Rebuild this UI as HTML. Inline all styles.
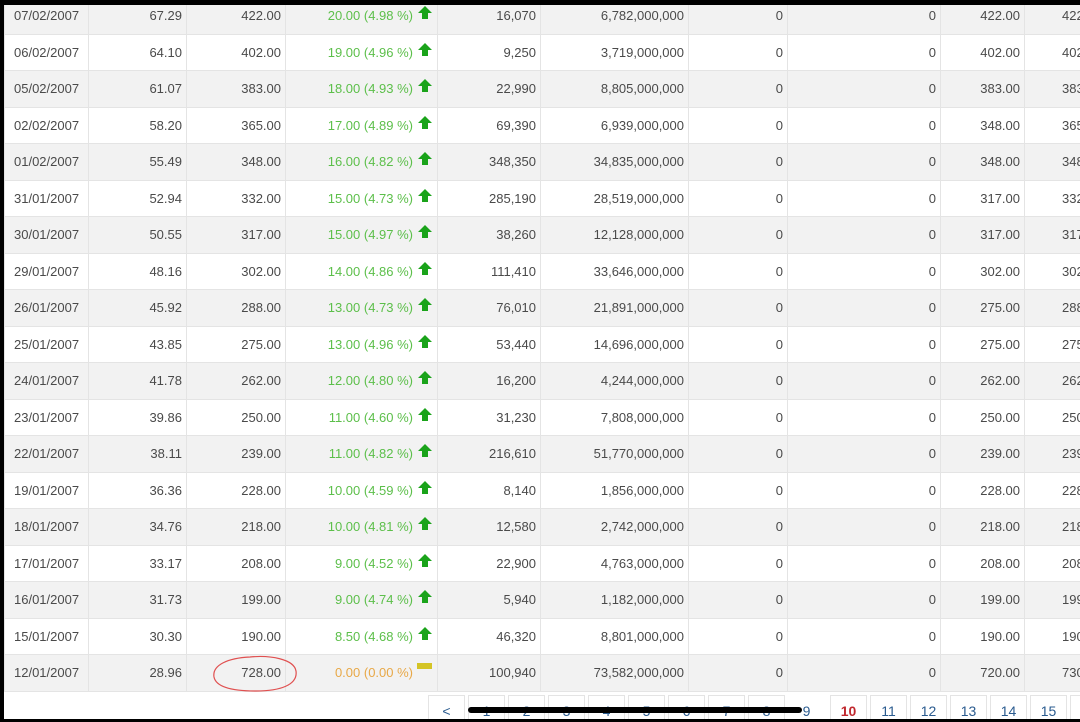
<!DOCTYPE html>
<html><head><meta charset="utf-8"><style>
html,body{margin:0;padding:0;width:1080px;height:722px;overflow:hidden;background:#fff;position:relative}
table{position:absolute;left:4px;top:-3px;border-collapse:collapse;table-layout:fixed;width:1100px;font:13px "Liberation Sans",sans-serif;color:#4a4a4a}
td{height:35.5px;border:1px solid #e4e4e4;padding:0 4px 0 0;text-align:right;white-space:nowrap;overflow:hidden}
td:first-child{text-align:left;padding-left:9px}
tr:nth-child(odd) td{background:#f2f2f2}
td.c{position:relative;padding-right:24px;color:#5cbf4a}
td.c i{position:absolute;right:5px;top:8px;width:14px;height:13px}
td.y{color:#e8a847}
td.y b{position:absolute;right:5px;top:8px;width:15px;height:6px;background:#d4c425}
td.l{text-align:left;padding-left:37px}
.blk{position:absolute;background:#000}
.pg{position:absolute;top:695px;width:37px;height:30px;border:1px solid #e4e4e4;box-sizing:border-box;font:14px "Liberation Sans",sans-serif;color:#2a5b8f;text-align:center;line-height:30px;background:#fff}
</style></head><body>
<svg width="0" height="0" style="position:absolute"><defs><symbol id="a" viewBox="0 0 14 13"><path d="M7 0L14 7H10V13H4V7H0Z" fill="#1aa31a"/></symbol></defs></svg>
<table>
<colgroup><col style="width:84px"><col style="width:98px"><col style="width:99px"><col style="width:152px"><col style="width:103px"><col style="width:148px"><col style="width:99px"><col style="width:153px"><col style="width:84px"><col style="width:80px"></colgroup>
<tr><td>07/02/2007</td><td>67.29</td><td>422.00</td><td class="c">20.00 (4.98 %)<i><svg width="14" height="13"><use href="#a"/></svg></i></td><td>16,070</td><td>6,782,000,000</td><td>0</td><td>0</td><td>422.00</td><td class="l">422.00</td></tr>
<tr><td>06/02/2007</td><td>64.10</td><td>402.00</td><td class="c">19.00 (4.96 %)<i><svg width="14" height="13"><use href="#a"/></svg></i></td><td>9,250</td><td>3,719,000,000</td><td>0</td><td>0</td><td>402.00</td><td class="l">402.00</td></tr>
<tr><td>05/02/2007</td><td>61.07</td><td>383.00</td><td class="c">18.00 (4.93 %)<i><svg width="14" height="13"><use href="#a"/></svg></i></td><td>22,990</td><td>8,805,000,000</td><td>0</td><td>0</td><td>383.00</td><td class="l">383.00</td></tr>
<tr><td>02/02/2007</td><td>58.20</td><td>365.00</td><td class="c">17.00 (4.89 %)<i><svg width="14" height="13"><use href="#a"/></svg></i></td><td>69,390</td><td>6,939,000,000</td><td>0</td><td>0</td><td>348.00</td><td class="l">365.00</td></tr>
<tr><td>01/02/2007</td><td>55.49</td><td>348.00</td><td class="c">16.00 (4.82 %)<i><svg width="14" height="13"><use href="#a"/></svg></i></td><td>348,350</td><td>34,835,000,000</td><td>0</td><td>0</td><td>348.00</td><td class="l">348.00</td></tr>
<tr><td>31/01/2007</td><td>52.94</td><td>332.00</td><td class="c">15.00 (4.73 %)<i><svg width="14" height="13"><use href="#a"/></svg></i></td><td>285,190</td><td>28,519,000,000</td><td>0</td><td>0</td><td>317.00</td><td class="l">332.00</td></tr>
<tr><td>30/01/2007</td><td>50.55</td><td>317.00</td><td class="c">15.00 (4.97 %)<i><svg width="14" height="13"><use href="#a"/></svg></i></td><td>38,260</td><td>12,128,000,000</td><td>0</td><td>0</td><td>317.00</td><td class="l">317.00</td></tr>
<tr><td>29/01/2007</td><td>48.16</td><td>302.00</td><td class="c">14.00 (4.86 %)<i><svg width="14" height="13"><use href="#a"/></svg></i></td><td>111,410</td><td>33,646,000,000</td><td>0</td><td>0</td><td>302.00</td><td class="l">302.00</td></tr>
<tr><td>26/01/2007</td><td>45.92</td><td>288.00</td><td class="c">13.00 (4.73 %)<i><svg width="14" height="13"><use href="#a"/></svg></i></td><td>76,010</td><td>21,891,000,000</td><td>0</td><td>0</td><td>275.00</td><td class="l">288.00</td></tr>
<tr><td>25/01/2007</td><td>43.85</td><td>275.00</td><td class="c">13.00 (4.96 %)<i><svg width="14" height="13"><use href="#a"/></svg></i></td><td>53,440</td><td>14,696,000,000</td><td>0</td><td>0</td><td>275.00</td><td class="l">275.00</td></tr>
<tr><td>24/01/2007</td><td>41.78</td><td>262.00</td><td class="c">12.00 (4.80 %)<i><svg width="14" height="13"><use href="#a"/></svg></i></td><td>16,200</td><td>4,244,000,000</td><td>0</td><td>0</td><td>262.00</td><td class="l">262.00</td></tr>
<tr><td>23/01/2007</td><td>39.86</td><td>250.00</td><td class="c">11.00 (4.60 %)<i><svg width="14" height="13"><use href="#a"/></svg></i></td><td>31,230</td><td>7,808,000,000</td><td>0</td><td>0</td><td>250.00</td><td class="l">250.00</td></tr>
<tr><td>22/01/2007</td><td>38.11</td><td>239.00</td><td class="c">11.00 (4.82 %)<i><svg width="14" height="13"><use href="#a"/></svg></i></td><td>216,610</td><td>51,770,000,000</td><td>0</td><td>0</td><td>239.00</td><td class="l">239.00</td></tr>
<tr><td>19/01/2007</td><td>36.36</td><td>228.00</td><td class="c">10.00 (4.59 %)<i><svg width="14" height="13"><use href="#a"/></svg></i></td><td>8,140</td><td>1,856,000,000</td><td>0</td><td>0</td><td>228.00</td><td class="l">228.00</td></tr>
<tr><td>18/01/2007</td><td>34.76</td><td>218.00</td><td class="c">10.00 (4.81 %)<i><svg width="14" height="13"><use href="#a"/></svg></i></td><td>12,580</td><td>2,742,000,000</td><td>0</td><td>0</td><td>218.00</td><td class="l">218.00</td></tr>
<tr><td>17/01/2007</td><td>33.17</td><td>208.00</td><td class="c">9.00 (4.52 %)<i><svg width="14" height="13"><use href="#a"/></svg></i></td><td>22,900</td><td>4,763,000,000</td><td>0</td><td>0</td><td>208.00</td><td class="l">208.00</td></tr>
<tr><td>16/01/2007</td><td>31.73</td><td>199.00</td><td class="c">9.00 (4.74 %)<i><svg width="14" height="13"><use href="#a"/></svg></i></td><td>5,940</td><td>1,182,000,000</td><td>0</td><td>0</td><td>199.00</td><td class="l">199.00</td></tr>
<tr><td>15/01/2007</td><td>30.30</td><td>190.00</td><td class="c">8.50 (4.68 %)<i><svg width="14" height="13"><use href="#a"/></svg></i></td><td>46,320</td><td>8,801,000,000</td><td>0</td><td>0</td><td>190.00</td><td class="l">190.00</td></tr>
<tr><td>12/01/2007</td><td>28.96</td><td>728.00</td><td class="c y">0.00 (0.00 %)<b></b></td><td>100,940</td><td>73,582,000,000</td><td>0</td><td>0</td><td>720.00</td><td class="l">730.00</td></tr>
</table>
<svg style="position:absolute;left:210px;top:653px" width="92" height="42"><path d="M40 4C60 2 84 6 86 18C88 32 70 38 46 38C22 38 6 34 4 24C2 12 18 5 40 4Z" fill="none" stroke="#e05050" stroke-width="1.2"/></svg>
<div class="pg" style="left:428px">&lt;</div>
<div class="pg" style="left:468px">1</div>
<div class="pg" style="left:508px">2</div>
<div class="pg" style="left:548px">3</div>
<div class="pg" style="left:588px">4</div>
<div class="pg" style="left:628px">5</div>
<div class="pg" style="left:668px">6</div>
<div class="pg" style="left:708px">7</div>
<div class="pg" style="left:748px">8</div>
<div class="pg" style="left:788px;border-color:transparent">9</div>
<div class="pg" style="left:830px;color:#c0282e;font-weight:bold">10</div>
<div class="pg" style="left:870px">11</div>
<div class="pg" style="left:910px">12</div>
<div class="pg" style="left:950px">13</div>
<div class="pg" style="left:990px">14</div>
<div class="pg" style="left:1030px">15</div>
<div class="pg" style="left:1070px"></div>
<div class="blk" style="left:468px;top:707px;width:334px;height:6px;border-radius:3px"></div>
<div class="blk" style="left:0;top:0;width:1080px;height:5px"></div>
<div class="blk" style="left:0;top:0;width:4px;height:722px"></div>
<div class="blk" style="left:0;top:719px;width:1080px;height:3px"></div>
</body></html>
